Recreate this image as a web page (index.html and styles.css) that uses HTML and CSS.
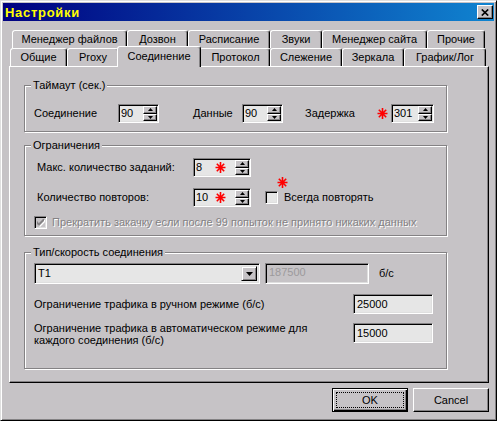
FILE: index.html
```html
<!DOCTYPE html>
<html>
<head>
<meta charset="utf-8">
<title>Настройки</title>
<link rel="stylesheet" href="styles.css">
</head>
<body>
<div class="window">
  <div class="titlebar">
    <span class="title">Настройки</span>
    <span class="close"><svg width="8" height="7" viewBox="0 0 8 7"><path d="M0.8 0.5 L7.2 6.5 M7.2 0.5 L0.8 6.5" stroke="#000" stroke-width="1.7" fill="none"/></svg></span>
  </div>

  <div class="tabs">
    <div class="tabrow row1">
      <div class="tab w-files">Менеджер файлов</div>
      <div class="tab w-dial">Дозвон</div>
      <div class="tab w-sched">Расписание</div>
      <div class="tab w-sound">Звуки</div>
      <div class="tab w-site">Менеджер сайта</div>
      <div class="tab w-other">Прочие</div>
    </div>
    <div class="tabrow row2">
      <div class="tab w-general">Общие</div>
      <div class="tab w-proxy">Proxy</div>
      <div class="tab selected w-conn">Соединение</div>
      <div class="tab w-proto">Протокол</div>
      <div class="tab w-watch">Слежение</div>
      <div class="tab w-mirror">Зеркала</div>
      <div class="tab w-graph">График/Лог</div>
    </div>
  </div>

  <div class="panel">
    <div class="group g-timeout">
      <div class="group-title">Таймаут (сек.)</div>
      <div class="row timeout-row">
        <span class="lbl l-conn">Соединение</span>
        <div class="field spin s-small"><span class="val">90</span><div class="spin-btns"><span class="sb"><svg width="5" height="3" viewBox="0 0 5 3"><path d="M2.5 0 L5 3 L0 3Z" fill="#000"/></svg></span><span class="sb"><svg width="5" height="3" viewBox="0 0 5 3"><path d="M0 0 L5 0 L2.5 3Z" fill="#000"/></svg></span></div></div>
        <span class="lbl l-data">Данные</span>
        <div class="field spin s-small"><span class="val">90</span><div class="spin-btns"><span class="sb"><svg width="5" height="3" viewBox="0 0 5 3"><path d="M2.5 0 L5 3 L0 3Z" fill="#000"/></svg></span><span class="sb"><svg width="5" height="3" viewBox="0 0 5 3"><path d="M0 0 L5 0 L2.5 3Z" fill="#000"/></svg></span></div></div>
        <span class="lbl l-delay">Задержка</span>
        <svg class="star star-delay" width="11" height="11" viewBox="0 0 11 11"><path d="M5.5 0 V11 M0.5 5.5 H10.5 M1.8 1.8 L9.2 9.2 M9.2 1.8 L1.8 9.2" stroke="#ff0000" stroke-width="1.6" fill="none"/></svg>
        <div class="field spin s-delay"><span class="val">301</span><div class="spin-btns"><span class="sb"><svg width="5" height="3" viewBox="0 0 5 3"><path d="M2.5 0 L5 3 L0 3Z" fill="#000"/></svg></span><span class="sb"><svg width="5" height="3" viewBox="0 0 5 3"><path d="M0 0 L5 0 L2.5 3Z" fill="#000"/></svg></span></div></div>
      </div>
    </div>

    <div class="group g-limits">
      <div class="group-title">Ограничения</div>
      <div class="row limit-row r-first">
        <span class="lbl l-limit">Макс. количество заданий:</span>
        <div class="field spin s-wide"><span class="val v-short">8</span><svg class="star" width="11" height="11" viewBox="0 0 11 11"><path d="M5.5 0 V11 M0.5 5.5 H10.5 M1.8 1.8 L9.2 9.2 M9.2 1.8 L1.8 9.2" stroke="#ff0000" stroke-width="1.6" fill="none"/></svg><span class="val-fill"></span><div class="spin-btns"><span class="sb"><svg width="5" height="3" viewBox="0 0 5 3"><path d="M2.5 0 L5 3 L0 3Z" fill="#000"/></svg></span><span class="sb"><svg width="5" height="3" viewBox="0 0 5 3"><path d="M0 0 L5 0 L2.5 3Z" fill="#000"/></svg></span></div></div>
      </div>
      <div class="row limit-row r-second">
        <span class="lbl l-limit">Количество повторов:</span>
        <div class="field spin s-wide"><span class="val v-short">10</span><svg class="star" width="11" height="11" viewBox="0 0 11 11"><path d="M5.5 0 V11 M0.5 5.5 H10.5 M1.8 1.8 L9.2 9.2 M9.2 1.8 L1.8 9.2" stroke="#ff0000" stroke-width="1.6" fill="none"/></svg><span class="val-fill"></span><div class="spin-btns"><span class="sb"><svg width="5" height="3" viewBox="0 0 5 3"><path d="M2.5 0 L5 3 L0 3Z" fill="#000"/></svg></span><span class="sb"><svg width="5" height="3" viewBox="0 0 5 3"><path d="M0 0 L5 0 L2.5 3Z" fill="#000"/></svg></span></div></div>
        <span class="check-wrap">
          <span class="checkbox"></span>
          <svg class="star star-over" width="11" height="11" viewBox="0 0 11 11"><path d="M5.5 0 V11 M0.5 5.5 H10.5 M1.8 1.8 L9.2 9.2 M9.2 1.8 L1.8 9.2" stroke="#ff0000" stroke-width="1.6" fill="none"/></svg>
        </span>
        <span class="lbl l-always">Всегда повторять</span>
      </div>
      <div class="row disabled-row">
        <span class="checkbox disabled"><svg width="7" height="7" viewBox="0 0 7 7"><path d="M0 2 L2 4 L6 0 L7 0 L7 2 L2 7 L0 5Z" fill="#848284"/></svg></span>
        <span class="lbl l-disabled">Прекратить закачку если после 99 попыток не принято никаких данных</span>
      </div>
    </div>

    <div class="group g-type">
      <div class="group-title">Тип/скорость соединения</div>
      <div class="row type-row">
        <div class="field combo"><span class="val">T1</span><span class="drop"><svg width="7" height="4" viewBox="0 0 7 4"><path d="M0 0 H7 L3.5 4Z" fill="#000"/></svg></span></div>
        <div class="field edit e-speed disabled-field"><span class="val">187500</span></div>
        <span class="lbl l-unit">б/с</span>
      </div>
      <div class="row traffic-row t-manual">
        <span class="lbl l-traffic">Ограничение трафика в ручном режиме (б/с)</span>
        <div class="field edit e-limit"><span class="val">25000</span></div>
      </div>
      <div class="row traffic-row t-auto">
        <span class="lbl l-traffic l-two">Ограничение трафика в автоматическом режиме для<br>каждого соединения (б/с)</span>
        <div class="field edit e-limit"><span class="val">15000</span></div>
      </div>
    </div>
  </div>

  <div class="buttons">
    <div class="btn default"><span class="focus">OK</span></div>
    <div class="btn">Cancel</div>
  </div>
</div>
</body>
</html>
```

FILE: styles.css
```css
html, body {
  margin: 0;
  padding: 0;
  background: #c6c3c6;
}

body {
  font-family: "Liberation Sans", Arial, sans-serif;
  font-size: 11px;
  line-height: 13px;
  color: #000;
}

.window {
  width: 497px;
  height: 421px;
  box-sizing: border-box;
  background: #c6c3c6;
  border: 1px solid;
  border-color: #dfdfdf #000 #000 #dfdfdf;
  box-shadow: inset 1px 1px #fff, inset -1px -1px #848284;
  padding: 2px;
  display: flex;
  flex-direction: column;
}

/* title bar */
.titlebar {
  height: 18px;
  flex: none;
  display: flex;
  align-items: center;
  background: linear-gradient(to right, #000080, #1084d0);
}

.title {
  padding-left: 2px;
  color: #ffff00;
  font-weight: bold;
  font-size: 13px;
  letter-spacing: 0.7px;
}

.close {
  margin-left: auto;
  margin-right: 1px;
  width: 16px;
  height: 14px;
  box-sizing: border-box;
  background: #c6c3c6;
  border: 1px solid;
  border-color: #fff #000 #000 #fff;
  box-shadow: inset -1px -1px #848284;
  display: flex;
  align-items: center;
  justify-content: center;
}

.close svg {
  display: block;
  margin-left: -1px;
}

/* tabs */
.tabs {
  margin: 9px 0 0 6px;
  flex: none;
}

.tabrow {
  display: flex;
  align-items: flex-start;
  height: 18px;
}

.row1 {
  padding-left: 3px;
}

.row2 {
  padding-left: 1px;
}

.tab {
  box-sizing: border-box;
  height: 18px;
  border: 1px solid;
  border-bottom: none;
  border-color: #fff #000 transparent #fff;
  border-radius: 3px 3px 0 0;
  box-shadow: inset -1px 0 #848284;
  display: flex;
  align-items: center;
  justify-content: center;
  white-space: nowrap;
  background: #c6c3c6;
}

.tab.selected {
  position: relative;
  z-index: 2;
  height: 21px;
  margin: -2px -2px -1px -2px;
  padding-bottom: 2px;
}

.w-files { width: 115px; }
.w-dial { width: 61px; }
.w-sched { width: 82px; }
.w-sound { width: 52px; }
.w-site { width: 105px; }
.w-other { width: 58px; }

.w-general { width: 57px; }
.w-proxy { width: 52px; }
.w-conn { width: 84px; }
.w-proto { width: 71px; padding-left: 2px; }
.w-watch { width: 72px; }
.w-mirror { width: 62px; }
.w-graph { width: 82px; }

/* panel */
.panel {
  flex: none;
  width: 480px;
  height: 317px;
  margin-left: 6px;
  box-sizing: border-box;
  border: 1px solid;
  border-color: #fff #000 #000 #fff;
  box-shadow: inset -1px -1px #848284;
  padding: 18px 0 0 14px;
}

.group {
  width: 423px;
  box-sizing: border-box;
  border: 1px solid #848284;
  box-shadow: 1px 1px 0 #fff, inset 1px 1px 0 #fff;
}

.group-title {
  width: fit-content;
  margin: -7px 0 0 6px;
  padding: 0 2px;
  background: #c6c3c6;
  line-height: 13px;
  height: 13px;
}

.g-timeout {
  padding-bottom: 8px;
}

.g-limits {
  margin-top: 13px;
  padding-bottom: 6px;
}

.g-type {
  margin-top: 16px;
  padding-bottom: 22px;
}

.row {
  display: flex;
  align-items: center;
}

.lbl {
  white-space: nowrap;
  flex: none;
}

/* timeout row */
.timeout-row {
  margin-top: 12px;
  padding-left: 9px;
}

.l-conn { width: 84px; }
.l-data { width: 49px; margin-left: 34px; }
.l-delay { width: 72px; margin-left: 22px; }

.star {
  display: block;
  flex: none;
}

.star-delay {
  margin-right: 3px;
}

/* generic sunken field */
.field {
  box-sizing: border-box;
  border: 1px solid;
  border-color: #848284 #fff #fff #848284;
  box-shadow: inset 1px 1px #000, inset -1px -1px #dfdfdf;
  background: #e6e6e6;
  display: flex;
  align-items: center;
  padding: 1px;
  flex: none;
}

.val {
  padding-left: 1px;
  white-space: nowrap;
}

.spin {
  height: 19px;
}

.spin .val {
  flex: 1;
}

.s-small { width: 41px; }
.s-delay { width: 43px; }
.s-wide { width: 58px; }

.spin .v-short {
  flex: none;
  width: 19px;
}

.val-fill {
  flex: 1;
}

.spin-btns {
  width: 14px;
  align-self: stretch;
  display: flex;
  flex-direction: column;
}

.sb {
  flex: 1;
  box-sizing: border-box;
  background: #c6c3c6;
  border: 1px solid;
  border-color: #fff #000 #000 #fff;
  box-shadow: inset -1px -1px #848284;
  display: flex;
  align-items: center;
  justify-content: center;
}

.sb svg {
  display: block;
}

/* limits */
.limit-row {
  padding-left: 12px;
}

.r-first { margin-top: 6px; }
.r-second { margin-top: 11px; }

.l-limit { width: 156px; }

.check-wrap {
  position: relative;
  margin-left: 14px;
  display: block;
  flex: none;
}

.checkbox {
  display: flex;
  align-items: center;
  justify-content: center;
  width: 13px;
  height: 13px;
  box-sizing: border-box;
  border: 1px solid;
  border-color: #848284 #fff #fff #848284;
  box-shadow: inset 1px 1px #000, inset -1px -1px #dfdfdf;
  background: #e6e6e6;
  flex: none;
}

.checkbox.disabled {
  background: #c6c3c6;
}

.checkbox.disabled svg {
  display: block;
  filter: drop-shadow(1px 1px 0 #fff);
}

.star-over {
  position: absolute;
  left: 12px;
  top: -14px;
}

.l-always {
  margin-left: 6px;
}

.disabled-row {
  margin-top: 9px;
  padding-left: 9px;
}

.l-disabled {
  margin-left: 5px;
  color: #848284;
  text-shadow: 1px 1px 0 #fff;
}

/* connection type */
.type-row {
  margin-top: 4px;
  padding-left: 9px;
}

.combo {
  width: 226px;
  height: 21px;
  padding: 2px;
}

.combo .val {
  flex: 1;
  padding-left: 1px;
}

.drop {
  width: 16px;
  align-self: stretch;
  box-sizing: border-box;
  background: #c6c3c6;
  border: 1px solid;
  border-color: #dfdfdf #000 #000 #dfdfdf;
  box-shadow: inset 1px 1px #fff, inset -1px -1px #848284;
  display: flex;
  align-items: center;
  justify-content: center;
}

.drop svg {
  display: block;
}

.edit {
  height: 21px;
  padding: 2px;
}

.e-speed {
  width: 104px;
  margin-left: 5px;
}

.disabled-field {
  background: #c6c3c6;
  color: #9c9a9c;
  align-items: flex-start;
}

.l-unit {
  margin-left: 10px;
}

.traffic-row {
  padding-left: 9px;
  align-items: flex-start;
}

.t-manual {
  margin-top: 10px;
  align-items: center;
}

.t-auto {
  margin-top: 9px;
}

.l-traffic {
  width: 319px;
}

.l-two {
  line-height: 12px;
  margin-top: -1px;
}

.e-limit {
  width: 80px;
  height: 20px;
}

/* buttons */
.buttons {
  flex: none;
  display: flex;
  justify-content: flex-end;
  gap: 5px;
  margin-top: 5px;
  padding-right: 5px;
}

.btn {
  width: 76px;
  height: 24px;
  box-sizing: border-box;
  border: 1px solid;
  border-color: #fff #000 #000 #fff;
  box-shadow: inset -1px -1px #848284;
  display: flex;
  align-items: center;
  justify-content: center;
}

.btn.default {
  border-color: #000;
  box-shadow: inset 1px 1px #fff, inset -1px -1px #000, inset -2px -2px #848284;
  align-items: stretch;
}

.focus {
  flex: 1;
  margin: 3px 3px 3px 3px;
  border: 1px dotted #000;
  display: flex;
  align-items: center;
  justify-content: center;
}
```
